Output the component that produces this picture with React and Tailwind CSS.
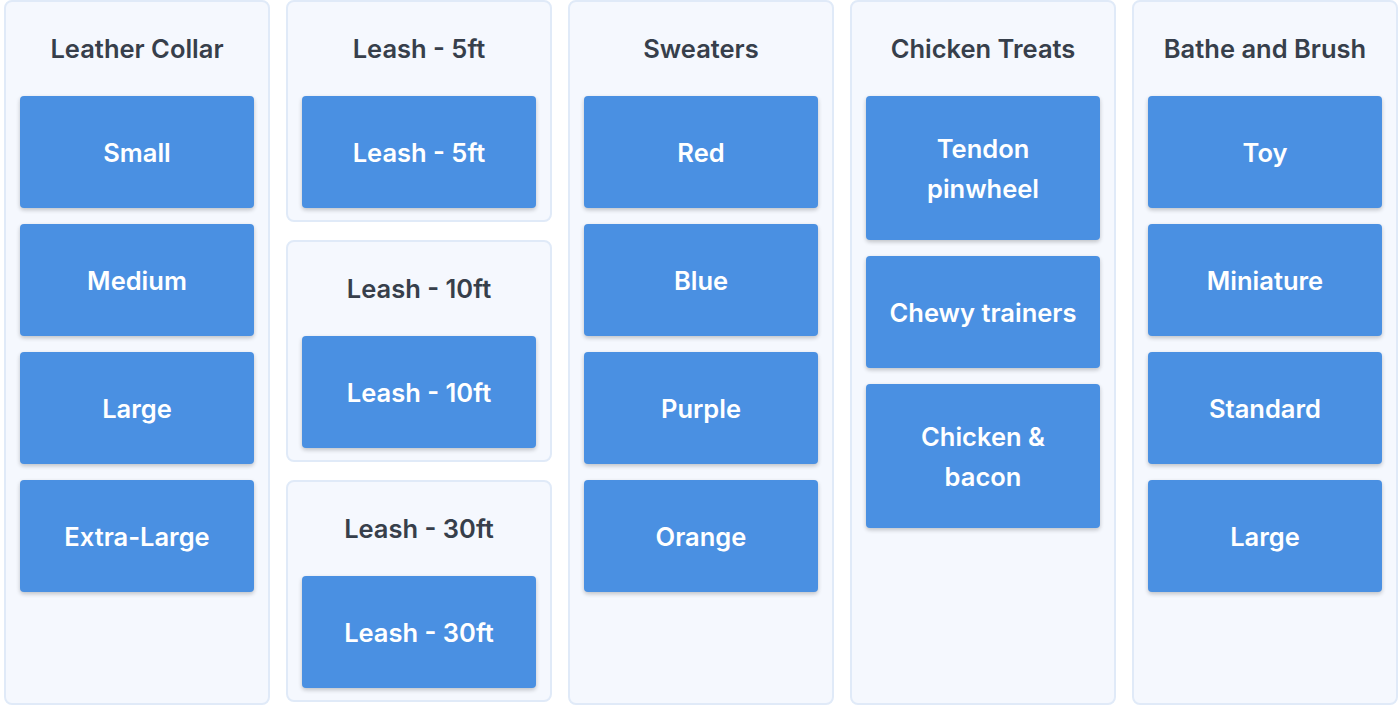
const columns = [
  { title: "Leather Collar", items: ["Small", "Medium", "Large", "Extra-Large"] },
  { groups: ["Leash - 5ft", "Leash - 10ft", "Leash - 30ft"] },
  { title: "Sweaters", items: ["Red", "Blue", "Purple", "Orange"] },
  { title: "Chicken Treats", items: ["Tendon pinwheel", "Chewy trainers", "Chicken & bacon"] },
  { title: "Bathe and Brush", items: ["Toy", "Miniature", "Standard", "Large"] },
];

const font = { fontFamily: "Inter, 'Noto Sans', sans-serif" };

const Card = ({ label }) => (
  <div className="min-h-[112px] w-full px-[22px] pt-[33px] pb-[31px] flex items-center justify-center text-center rounded bg-[#4a90e2] text-white text-[25.5px] leading-10 font-semibold shadow-[0_2px_4px_rgba(0,0,0,0.22)]">
    {label}
  </div>
);

const Title = ({ children }) => (
  <h3 className="h-[94px] pt-px flex items-center justify-center text-[25.5px] font-semibold text-[#373f4b]">
    {children}
  </h3>
);

const App = () => {
  return (
    <div className="flex gap-4 pl-1 h-[706px] bg-white" style={font}>
      {columns.map((col, i) =>
        col.groups ? (
          <div key={i} className="w-[266px] flex flex-col gap-[18px]">
            {col.groups.map((g) => (
              <div key={g} className="rounded-lg border-2 border-[#e0eaf8] bg-[#f5f8fe] px-[14px] pb-3">
                <Title>{g}</Title>
                <Card label={g} />
              </div>
            ))}
          </div>
        ) : (
          <div key={i} className="w-[266px] h-[705px] rounded-lg border-2 border-[#e0eaf8] bg-[#f5f8fe] px-[14px]">
            <Title>{col.title}</Title>
            <div className="flex flex-col gap-4">
              {col.items.map((it) => (
                <Card key={it} label={it} />
              ))}
            </div>
          </div>
        )
      )}
    </div>
  );
};

export default App;
